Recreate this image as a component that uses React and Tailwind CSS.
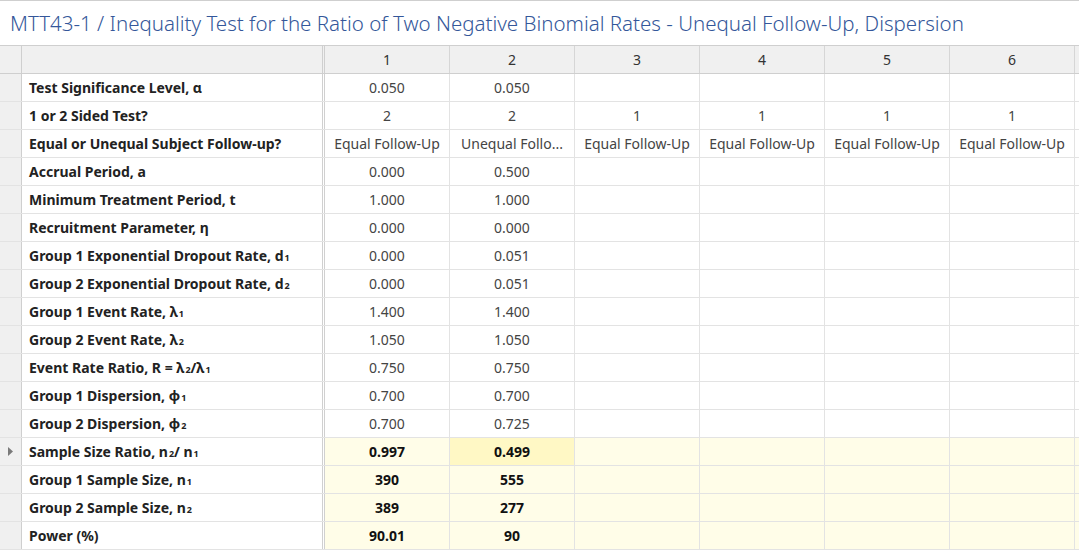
import React from "react";

const rows = [
  ["Test Significance Level, α", ["0.050", "0.050", "", "", "", ""]],
  ["1 or 2 Sided Test?", ["2", "2", "1", "1", "1", "1"]],
  ["Equal or Unequal Subject Follow-up?", ["Equal Follow-Up", "Unequal Follo...", "Equal Follow-Up", "Equal Follow-Up", "Equal Follow-Up", "Equal Follow-Up"]],
  ["Accrual Period, a", ["0.000", "0.500"]],
  ["Minimum Treatment Period, t", ["1.000", "1.000"]],
  ["Recruitment Parameter, η", ["0.000", "0.000"]],
  [<>Group 1 Exponential Dropout Rate, d<sub>1</sub></>, ["0.000", "0.051"]],
  [<>Group 2 Exponential Dropout Rate, d<sub>2</sub></>, ["0.000", "0.051"]],
  [<>Group 1 Event Rate, λ<sub>1</sub></>, ["1.400", "1.400"]],
  [<>Group 2 Event Rate, λ<sub>2</sub></>, ["1.050", "1.050"]],
  [<>Event Rate Ratio, R = λ<sub>2</sub>/λ<sub>1</sub></>, ["0.750", "0.750"]],
  [<>Group 1 Dispersion, φ<sub>1</sub></>, ["0.700", "0.700"]],
  [<>Group 2 Dispersion, φ<sub>2</sub></>, ["0.700", "0.725"]],
];

const outputs = [
  [<>Sample Size Ratio, n<sub>2</sub> / n<sub>1</sub></>, ["0.997", "0.499"], true],
  [<>Group 1 Sample Size, n<sub>1</sub></>, ["390", "555"]],
  [<>Group 2 Sample Size, n<sub>2</sub></>, ["389", "277"]],
  ["Power (%)", ["90.01", "90"]],
];

const cols = "grid grid-cols-[22px_303px_125px_125px_125px_125px_125px_125px_4px]";

const Row = ({ label, vals, out, sel }) => (
  <div className={`${cols} h-7 border-b border-[#e3e3e3]`}>
    <div className="bg-[#f0f0f0] border-r border-[#cfcfcf] flex items-center justify-center">
      {sel && (
        <svg width="5" height="9" viewBox="0 0 5 9">
          <path d="M0 0 L5 4.5 L0 9 Z" fill="#7a7a7a" />
        </svg>
      )}
    </div>
    <div className="flex items-center pl-[7px] font-bold text-[14px] text-[#222] border-r-[3px] border-double border-[#d0d0d0] [&_sub]:text-[9px] [&_sub]:align-[-2px] [&_sub]:ml-px">
      {label}
    </div>
    {[0, 1, 2, 3, 4, 5].map((i) => (
      <div
        key={i}
        className={`flex items-center justify-center text-[14px] border-r border-[#e3e3e3] ${
          out ? "font-bold text-[#111] " + (sel && i === 1 ? "bg-[#fff8c5]" : "bg-[#fffde8]") : "text-[#444]"
        }`}
      >
        {vals[i] || ""}
      </div>
    ))}
    <div className={out ? "bg-[#fffde8]" : ""} />
  </div>
);

export default function App() {
  return (
    <div className="w-[1079px] h-[551px] bg-white overflow-hidden font-['Noto_Sans','Open_Sans',sans-serif] border-t border-[#cfcfcf]">
      <div className="h-[44px] flex items-center pl-[10px] text-[20.5px] font-light text-[#34579a] font-['Lato','Noto_Sans',sans-serif]">
        MTT43-1 / Inequality Test for the Ratio of Two Negative Binomial Rates - Unequal Follow-Up, Dispersion
      </div>
      <div className="border-t border-[#cfcfcf]">
        <div className={`${cols} h-7 bg-[#f0f0f0] border-b border-[#cfcfcf]`}>
          <div className="border-r border-[#cfcfcf]" />
          <div className="border-r-[3px] border-double border-[#cfcfcf]" />
          {[1, 2, 3, 4, 5, 6].map((n) => (
            <div key={n} className="flex items-center justify-center text-[14px] text-[#333] border-r border-[#d6d6d6]">
              {n}
            </div>
          ))}
          <div />
        </div>
        {rows.map(([l, v], i) => (
          <Row key={i} label={l} vals={v} />
        ))}
        {outputs.map(([l, v, s], i) => (
          <Row key={"o" + i} label={l} vals={v} out sel={s} />
        ))}
      </div>
    </div>
  );
}
